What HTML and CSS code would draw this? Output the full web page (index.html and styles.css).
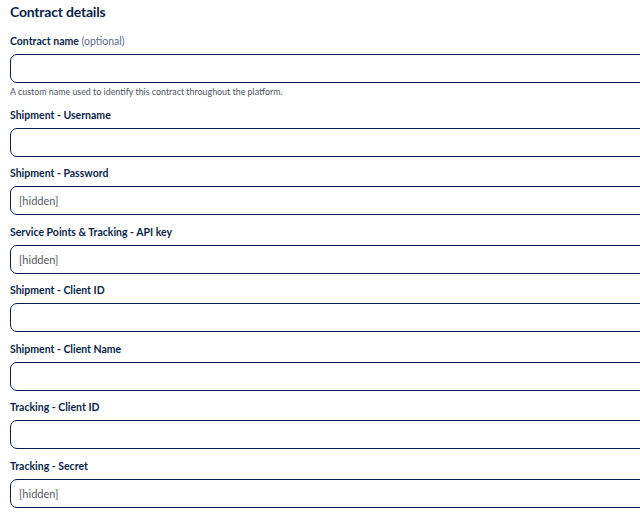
FILE: index.html
```html
<!DOCTYPE html>
<html lang="en">
<head>
<meta charset="utf-8">
<title>Contract details</title>
<link rel="stylesheet" href="styles.css">
</head>
<body>
<section class="form">
  <h2 class="title">Contract details</h2>
  <div class="field">
    <label class="label">Contract name <span class="optional">(optional)</span></label>
    <div class="input"></div>
    <p class="help">A custom name used to identify this contract throughout the platform.</p>
  </div>
  <div class="field">
    <label class="label">Shipment - Username</label>
    <div class="input"></div>
  </div>
  <div class="field">
    <label class="label">Shipment - Password</label>
    <div class="input">[hidden]</div>
  </div>
  <div class="field">
    <label class="label">Service Points &amp; Tracking - API key</label>
    <div class="input">[hidden]</div>
  </div>
  <div class="field">
    <label class="label">Shipment - Client ID</label>
    <div class="input"></div>
  </div>
  <div class="field">
    <label class="label">Shipment - Client Name</label>
    <div class="input"></div>
  </div>
  <div class="field">
    <label class="label">Tracking - Client ID</label>
    <div class="input"></div>
  </div>
  <div class="field">
    <label class="label">Tracking - Secret</label>
    <div class="input">[hidden]</div>
  </div>
</section>
</body>
</html>
```

FILE: styles.css
```css
html, body {
  margin: 0;
  padding: 0;
  background: #ffffff;
  overflow: hidden;
}
body {
  font-family: Lato, "Open Sans", sans-serif;
  color: #0b1f4b;
}
.form {
  width: 700px;
  padding: 2px 0 0 10px;
  display: flex;
  flex-direction: column;
}
.title {
  margin: 0 0 11px 0;
  font-size: 14px;
  line-height: 20px;
  font-weight: 700;
  letter-spacing: -0.2px;
}
.field {
  display: flex;
  flex-direction: column;
  margin-bottom: 8.55px;
}
.label {
  font-size: 10.5px;
  line-height: 16px;
  font-weight: 700;
  margin-bottom: 5px;
}
.optional {
  font-weight: 400;
  color: #5b6a86;
}
.input {
  box-sizing: border-box;
  height: 29px;
  border: 1px solid #0b1f4b;
  border-radius: 7px;
  padding: 0 8px;
  font-size: 11px;
  line-height: 27px;
  color: #555a63;
}
.help {
  margin: 3px 0 0 0;
  font-size: 8.9px;
  line-height: 12px;
  color: #4f5561;
}
```
